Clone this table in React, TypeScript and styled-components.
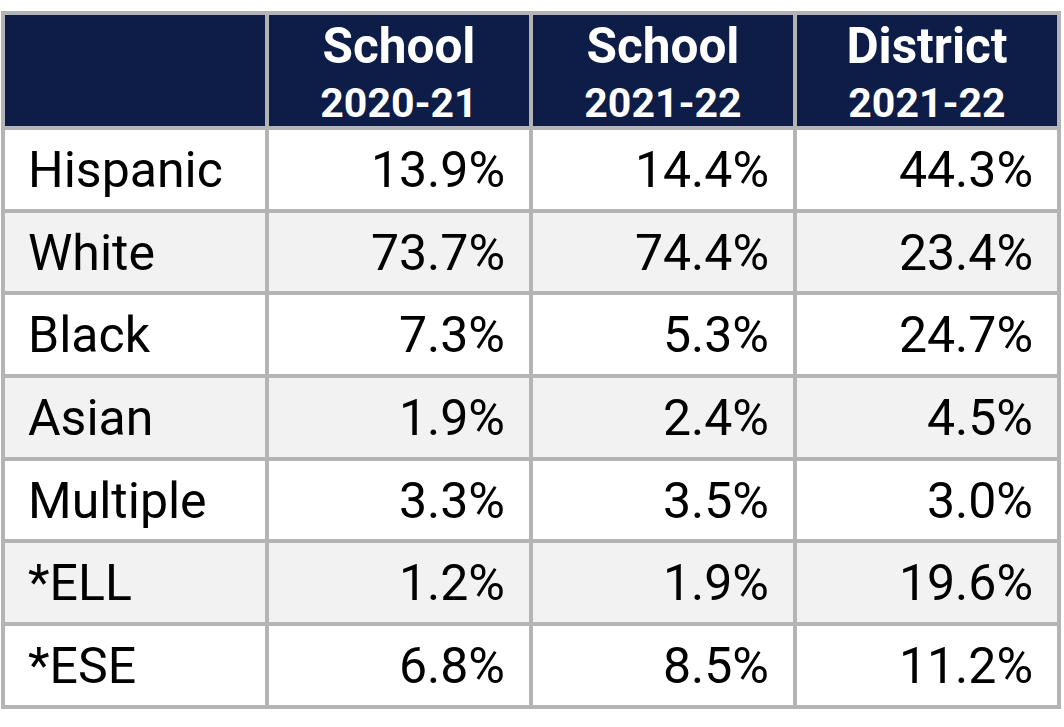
import styled, { createGlobalStyle } from 'styled-components';

const GlobalStyle = createGlobalStyle`
  body {
    margin: 0;
    background: #ffffff;
    font-family: Roboto, "Liberation Sans", Arial, sans-serif;
  }
`;

const Page = styled.div`
  padding: 11px 0 0 1px;
`;

const Table = styled.div`
  display: grid;
  grid-template-columns: repeat(4, 260px);
  grid-template-rows: 111px repeat(7, 78.67px);
  gap: 4px;
  padding: 4px;
  width: max-content;
  background: #b4b4b4;
`;

const HeadCell = styled.div`
  background: #0e1d48;
  color: #ffffff;
  font-weight: 700;
  display: flex;
  flex-direction: column;
  align-items: center;
  padding-top: 6px;
  box-sizing: border-box;
`;

const HeadTitle = styled.div`
  font-size: 49.5px;
  line-height: 50px;
`;

const HeadYear = styled.div`
  font-size: 41px;
  line-height: 44px;
  margin-top: 10px;
`;

const Cell = styled.div<{ $shaded: boolean; $align: 'left' | 'right' }>`
  background: ${(p) => (p.$shaded ? '#f2f2f2' : '#ffffff')};
  color: #000000;
  font-size: 50px;
  line-height: 75.67px;
  padding: 3px ${(p) => (p.$align === 'right' ? '24px' : '0')} 0
    ${(p) => (p.$align === 'left' ? '23px' : '0')};
  text-align: ${(p) => p.$align};
  box-sizing: border-box;
  white-space: nowrap;
`;

const columns = [
  { title: 'School', year: '2020-21' },
  { title: 'School', year: '2021-22' },
  { title: 'District', year: '2021-22' },
];

const rows: [string, string, string, string][] = [
  ['Hispanic', '13.9%', '14.4%', '44.3%'],
  ['White', '73.7%', '74.4%', '23.4%'],
  ['Black', '7.3%', '5.3%', '24.7%'],
  ['Asian', '1.9%', '2.4%', '4.5%'],
  ['Multiple', '3.3%', '3.5%', '3.0%'],
  ['*ELL', '1.2%', '1.9%', '19.6%'],
  ['*ESE', '6.8%', '8.5%', '11.2%'],
];

export default function App() {
  return (
    <>
      <GlobalStyle />
      <Page>
        <Table>
          <HeadCell />
          {columns.map((c, i) => (
            <HeadCell key={i}>
              <HeadTitle>{c.title}</HeadTitle>
              <HeadYear>{c.year}</HeadYear>
            </HeadCell>
          ))}
          {rows.map((r, ri) =>
            r.map((v, ci) => (
              <Cell
                key={`${ri}-${ci}`}
                $shaded={ri % 2 === 1}
                $align={ci === 0 ? 'left' : 'right'}
              >
                {v}
              </Cell>
            ))
          )}
        </Table>
      </Page>
    </>
  );
}
